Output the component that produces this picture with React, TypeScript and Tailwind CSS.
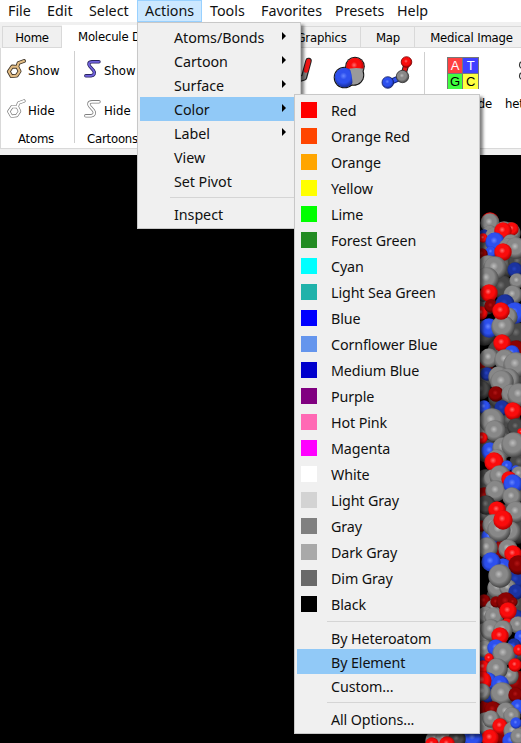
import type { ReactNode } from 'react';

type Kind = 'c' | 'o' | 'n' | 'C' | 'O' | 'N';
type Atom = [number, number, number, Kind];

// Atoms listed back to front: x, y, radius, element (capitals are shaded, deeper atoms)
const atoms: Atom[] = [
  [488, 250, 12, 'C'], [506, 265, 12, 'C'], [486, 272, 12, 'C'], [502, 287, 11, 'C'], [518, 262, 9, 'C'], [487, 305, 9, 'C'], [484, 333, 12, 'C'],
  [517, 334, 11, 'C'], [500, 352, 12, 'C'], [484, 365, 9, 'O'], [516, 350, 9, 'O'], [486, 378, 10, 'C'], [515, 378, 11, 'C'], [500, 398, 11, 'C'],
  [509, 421, 11, 'C'], [486, 414, 10, 'C'], [505, 436, 8, 'C'], [487, 451, 11, 'C'], [520, 463, 10, 'C'], [486, 482, 12, 'C'], [518, 486, 12, 'C'],
  [484, 497, 9, 'O'], [510, 516, 12, 'C'], [484, 517, 11, 'C'], [517, 530, 13, 'C'], [484, 540, 11, 'C'], [501, 548, 11, 'O'], [516, 566, 11, 'C'],
  [516, 580, 9, 'N'], [500, 598, 13, 'C'], [517, 605, 11, 'C'], [485, 622, 12, 'C'], [515, 620, 10, 'N'], [484, 658, 10, 'N'], [518, 650, 11, 'C'],
  [516, 684, 13, 'O'], [487, 690, 13, 'C'], [492, 708, 12, 'O'], [515, 700, 9, 'C'], [504, 733, 13, 'O'], [484, 730, 12, 'C'],
  [510, 233, 10, 'c'], [490, 221, 8, 'o'], [490, 223, 9, 'c'], [490, 233, 7, 'c'], [484, 235, 5, 'N'], [494, 236, 8, 'c'],
  [504, 231, 9, 'c'], [512, 229, 6, 'o'], [503, 231, 8, 'o'], [483, 238, 4, 'o'], [495, 242, 9, 'n'],
  [511, 243, 8, 'c'], [508, 248, 9, 'c'], [516, 248, 10, 'c'], [491, 252, 5, 'n'], [482, 254, 5, 'O'], [503, 252, 8, 'o'],
  [488, 266, 10, 'c'], [495, 268, 11, 'c'], [487, 279, 11, 'c'], [515, 270, 7, 'N'], [517, 281, 7, 'c'], [513, 295, 9, 'c'],
  [483, 296, 5, 'C'], [489, 293, 8, 'o'], [481, 313, 6, 'o'], [491, 306, 6, 'O'], [505, 304, 9, 'N'], [515, 313, 10, 'n'],
  [489, 328, 9, 'n'], [508, 317, 9, 'c'], [503, 327, 11, 'c'], [501, 311, 8, 'o'], [502, 343, 8, 'o'],
  [489, 358, 9, 'c'], [512, 353, 7, 'n'], [505, 360, 10, 'c'], [516, 365, 12, 'c'], [487, 374, 6, 'N'], [499, 377, 10, 'c'],
  [508, 380, 11, 'c'], [502, 382, 11, 'c'], [481, 390, 9, 'C'], [496, 394, 7, 'O'], [511, 394, 9, 'c'], [519, 395, 11, 'c'],
  [484, 407, 6, 'n'], [502, 408, 7, 'N'], [513, 411, 8, 'o'], [486, 427, 10, 'c'], [492, 421, 12, 'c'], [495, 431, 10, 'c'],
  [516, 427, 8, 'C'], [482, 438, 5, 'o'], [521, 432, 3, 'o'], [490, 451, 8, 'n'], [503, 448, 10, 'c'], [514, 445, 12, 'c'],
  [497, 459, 9, 'c'], [494, 462, 9, 'o'], [507, 466, 5, 'n'], [516, 470, 4, 'n'], [519, 474, 7, 'c'], [493, 479, 9, 'c'], [500, 476, 10, 'c'],
  [496, 491, 10, 'c'], [512, 496, 9, 'c'], [509, 479, 7, 'o'], [513, 484, 9, 'n'], [512, 497, 9, 'c'], [486, 505, 9, 'C'], [516, 512, 10, 'c'],
  [497, 510, 8, 'o'], [481, 526, 5, 'O'], [510, 532, 10, 'c'], [490, 537, 8, 'n'], [493, 525, 10, 'c'], [499, 530, 11, 'c'], [503, 520, 9, 'o'],
  [487, 548, 10, 'c'], [508, 549, 9, 'c'], [513, 554, 8, 'o'],
  [503, 567, 8, 'n'], [491, 562, 9, 'n'], [518, 565, 9, 'O'], [498, 588, 10, 'c'], [508, 588, 8, 'c'], [500, 576, 11, 'c'],
  [516, 592, 7, 'N'], [484, 601, 6, 'O'], [494, 608, 8, 'c'], [496, 602, 5, 'O'], [506, 602, 9, 'O'], [513, 602, 4, 'O'],
  [486, 615, 8, 'c'], [494, 617, 9, 'c'], [508, 611, 8, 'o'], [507, 625, 6, 'o'], [518, 625, 8, 'c'], [484, 634, 10, 'c'], [491, 630, 10, 'c'], [503, 630, 9, 'c'],
  [500, 636, 8, 'o'], [521, 637, 6, 'n'], [485, 649, 8, 'c'], [496, 648, 8, 'n'], [514, 645, 6, 'N'], [510, 652, 8, 'n'],
  [504, 654, 11, 'c'], [489, 658, 4, 'o'], [483, 667, 6, 'o'], [510, 676, 8, 'c'], [497, 669, 10, 'c'], [519, 650, 5, 'o'], [515, 665, 6, 'o'],
  [488, 681, 8, 'n'], [482, 681, 9, 'o'], [500, 684, 8, 'n'], [488, 695, 7, 'N'], [482, 692, 8, 'c'], [502, 694, 11, 'c'],
  [516, 695, 7, 'O'], [493, 710, 8, 'O'], [518, 707, 7, 'n'], [506, 712, 9, 'c'], [512, 716, 8, 'c'], [486, 724, 11, 'c'], [491, 719, 8, 'c'],
  [500, 726, 7, 'o'], [513, 731, 9, 'c'], [516, 723, 5, 'n'], [490, 738, 8, 'o'], [511, 741, 8, 'n'], [519, 737, 8, 'c'],
  [473, 738, 9, 'n'], [435, 740, 9, 'c'], [444, 739, 8, 'c'], [457, 739, 8, 'C'], [432, 744, 6, 'o'], [447, 744, 7, 'o'],
];

const palette: { id: Kind; hi: string; mid: string; low: string }[] = [
  { id: 'c', hi: '#bebebe', mid: '#888888', low: '#3c3c3c' },
  { id: 'o', hi: '#ff7070', mid: '#fa0c0c', low: '#a00000' },
  { id: 'n', hi: '#6686ff', mid: '#2d50ee', low: '#162a90' },
  { id: 'C', hi: '#727272', mid: '#484848', low: '#1c1c1c' },
  { id: 'O', hi: '#b51515', mid: '#8b0303', low: '#400000' },
  { id: 'N', hi: '#2744c4', mid: '#1b339f', low: '#0c1850' },
];

function Gradients() {
  return (
    <defs>
      {palette.map((p) => (
        <radialGradient key={p.id} id={'g' + p.id} cx="0.45" cy="0.42" r="0.6">
          <stop offset="0" stopColor={p.hi} />
          <stop offset="0.3" stopColor={p.mid} />
          <stop offset="0.6" stopColor={p.mid} />
          <stop offset="1" stopColor={p.low} />
        </radialGradient>
      ))}
      <clipPath id="redCap">
        <path d="M340 50 H370 V70.5 Q356 66 345 70 Z" />
      </clipPath>
      <clipPath id="blueCap">
        <path d="M330 62 H347.5 Q353 74 352.5 88 H330 Z" />
      </clipPath>
    </defs>
  );
}

function Molecule() {
  return (
    <svg className="block h-[588px] w-[521px] shrink-0" viewBox="0 155 521 588">
      <Gradients />
      {atoms.map(([x, y, r, k], i) => (
        <circle key={i} cx={x} cy={y} r={r + 0.7} fill={`url(#g${k})`} />
      ))}
    </svg>
  );
}

function AtomsIcon({ filled }: { filled?: boolean }) {
  const outer = filled ? '#3f3426' : '#777';
  const inner = filled ? '#e3bd85' : '#fff';
  const d = 'M8.2 7.5 L13.3 7.8 L15.6 12.3 L12.7 16.6 L7.5 17.2 L4.8 12.5 Z M13.3 7.8 L14.5 4 L20 2';
  return (
    <svg className="size-6 shrink-0" viewBox="0 0 24 24" fill="none" strokeLinejoin="round" strokeLinecap="round">
      <path d={d} stroke={outer} strokeWidth={filled ? 3.8 : 3.2} />
      <path d={d} stroke={inner} strokeWidth={filled ? 2.1 : 1.9} />
    </svg>
  );
}

function CartoonIcon({ filled }: { filled?: boolean }) {
  const d = 'M19 2.8 H12 C8.5 2.8 8 5 10 7.5 L13.5 11.5 C15.5 14 14 16.5 11 16.8 H5.8';
  return (
    <svg className="size-6 shrink-0" viewBox="0 0 24 24" fill="none" strokeLinejoin="round" strokeLinecap="round">
      <path d={d} stroke={filled ? '#28235f' : '#808080'} strokeWidth="3.4" />
      <path d={d} stroke={filled ? '#7163de' : '#fff'} strokeWidth="1.8" />
    </svg>
  );
}

function Tool({ icon, label }: { icon: ReactNode; label: string }) {
  return (
    <div className="flex h-10 shrink-0 items-center text-[13px] tracking-normal">
      {icon}
      <span>{label}</span>
    </div>
  );
}

const tab = "flex h-[22px] items-center justify-center border border-[#d9d9d9] bg-[#f0f0f0] pt-[2px] text-[13px] whitespace-nowrap shrink-0";

function Ribbon() {
  return (
    <div className="h-[133px] bg-[#f0f0f0] pt-[3px] font-['DejaVu_Sans_Condensed','Noto_Sans',sans-serif] tracking-[-0.2px] text-black">
      <div className="flex h-[23px] items-end overflow-hidden pl-[2px]">
        <div className={tab + ' w-[60px]'}>Home</div>
        <div className="flex h-[23px] w-[99px] shrink-0 items-center overflow-hidden bg-white pl-4 text-[13px] whitespace-nowrap">Molecule Display</div>
        <div className={tab + ' w-[118px]'} />
        <div className={tab + ' w-[82px] border-l-0 pl-1'}>Graphics</div>
        <div className={tab + ' w-[54px] border-l-0 pl-px'}>Map</div>
        <div className={tab + ' w-[115px] border-l-0 pr-px'}>Medical Image</div>
      </div>
      <div className="relative flex h-[101px] border-b border-l border-[#d9d9d9] bg-white">
        <div className="mt-[3px] flex h-[92px] w-[74px] flex-col border-r border-[#cfcfcf] pl-[3px]">
          <Tool icon={<AtomsIcon filled />} label="Show" />
          <Tool icon={<AtomsIcon />} label="Hide" />
          <span className="-mt-[2px] pl-[14px] text-[13px]">Atoms</span>
        </div>
        <div className="mt-[3px] flex h-[92px] w-[74px] flex-col pl-[5px]">
          <Tool icon={<CartoonIcon filled />} label="Show" />
          <Tool icon={<CartoonIcon />} label="Hide" />
          <span className="-mt-[2px] pl-[7px] text-[13px]">Cartoons</span>
        </div>
        <svg className="absolute top-0 left-[289px] h-[60px] w-[231px]" viewBox="290 48 231 60">
          <path d="M299 79 L304 77.5 L308.5 61" stroke="#222" strokeWidth="6.5" fill="none" strokeLinecap="round" strokeLinejoin="round" />
          <path d="M299 79 L304 77.5 L306 70" stroke="#888" strokeWidth="4" fill="none" strokeLinecap="round" strokeLinejoin="round" />
          <path d="M306 70.5 L308.5 61" stroke="#ee1515" strokeWidth="4.5" fill="none" strokeLinecap="round" />
          <g fill="#111">
            <circle cx="355" cy="66.5" r="9.8" />
            <circle cx="353.5" cy="75" r="10.8" />
            <circle cx="344.5" cy="77.5" r="10.8" />
          </g>
          <circle cx="355" cy="66.5" r="8.8" fill="#8c8c8c" />
          <circle cx="344.5" cy="77.5" r="9.8" fill="#8c8c8c" clipPath="url(#blueCap)" />
          <circle cx="353.5" cy="75" r="9.8" fill="#9a9a9a" />
          <circle cx="355" cy="66.5" r="8.8" fill="url(#go)" clipPath="url(#redCap)" />
          <circle cx="344.5" cy="77.5" r="9.8" fill="url(#gn)" clipPath="url(#blueCap)" />
          <path d="M403 76 L406.5 64" stroke="#222" strokeWidth="6" />
          <path d="M403 76 L406.5 64" stroke="#e51818" strokeWidth="4" />
          <path d="M388 83 L402 77" stroke="#152780" strokeWidth="6" />
          <path d="M388 83 L402 77" stroke="#3152ee" strokeWidth="4" />
          <circle cx="406.5" cy="62" r="5.3" fill="url(#go)" stroke="#7d0000" strokeWidth="0.8" />
          <circle cx="402.5" cy="76.5" r="6.2" fill="url(#gc)" stroke="#333" strokeWidth="0.8" />
          <circle cx="387.8" cy="82.5" r="5.8" fill="url(#gn)" stroke="#111d60" strokeWidth="0.8" />
          <path d="M424.5 52 V143" stroke="#cfcfcf" />
        </svg>
        <div className="absolute top-[9px] left-[446px] grid size-8 grid-cols-2 border border-[#777] text-center font-['Liberation_Sans',sans-serif] text-[13px] leading-[15px]">
          <span className="border-r border-b border-[#777] bg-[#ff4040] text-white">A</span>
          <span className="border-b border-[#777] bg-[#4040ff] text-white">T</span>
          <span className="border-r border-[#777] bg-[#40ff40]">G</span>
          <span className="bg-[#ffff40]">C</span>
        </div>
        <span className="absolute top-[46px] right-[29px] text-[13px]">nucleotide</span>
        <span className="absolute top-[46px] left-[504px] text-[13px]">hetero</span>
        <svg className="absolute top-[12px] left-[517px] h-6 w-1" viewBox="0 0 4 24" fill="none" stroke="#333" strokeWidth="1.2">
          <circle cx="5" cy="5" r="3.5" />
          <circle cx="5" cy="16" r="3.5" />
        </svg>
      </div>
    </div>
  );
}

const actions = ['Atoms/Bonds', 'Cartoon', 'Surface', 'Color', 'Label', 'View', 'Set Pivot'];

const colors: [string, string][] = [
  ['Red', '#ff0000'], ['Orange Red', '#ff4500'], ['Orange', '#ffa500'], ['Yellow', '#ffff00'], ['Lime', '#00ff00'],
  ['Forest Green', '#228b22'], ['Cyan', '#00ffff'], ['Light Sea Green', '#20b2aa'], ['Blue', '#0000ff'],
  ['Cornflower Blue', '#6495ed'], ['Medium Blue', '#0000cd'], ['Purple', '#800080'], ['Hot Pink', '#ff69b4'],
  ['Magenta', '#ff00ff'], ['White', '#ffffff'], ['Light Gray', '#d3d3d3'], ['Gray', '#808080'],
  ['Dark Gray', '#a9a9a9'], ['Dim Gray', '#696969'], ['Black', '#000000'],
];

function ActionsMenu() {
  return (
    <div className="absolute top-[22px] left-[137px] h-[207px] w-[164px] border border-[#c8c8c8] bg-[#f0f0f0] px-[2px] pt-[2px] tracking-[-0.05px] shadow-[3px_3px_3px_rgba(0,0,0,0.5)]">
      {actions.map((name, i) => (
        <div key={name} className={'flex h-6 items-center pl-[34px] ' + (name === 'Color' ? 'bg-[#91c9f7]' : '')}>
          <span className="pt-[2px]">{name}</span>
          {i < 5 && <span className="mr-3 mb-[2px] ml-auto h-0 w-0 border-y-4 border-l-4 border-y-transparent border-l-black" />}
        </div>
      ))}
      <div className="mt-1 mb-1 ml-[30px] h-px bg-[#d5d5d5]" />
      <div className="flex h-6 items-center pt-[2px] pl-[34px]">Inspect</div>
    </div>
  );
}

function ColorMenu() {
  return (
    <div className="absolute top-[94px] left-[294px] h-[640px] w-[186px] border border-[#c8c8c8] bg-[#f0f0f0] pt-[3px] pr-[3px] pl-[2px] tracking-[-0.11px] shadow-[3px_3px_3px_rgba(0,0,0,0.5)]">
      {colors.map(([name, hex]) => (
        <div key={name} className="flex h-[26px] items-center pb-[2px]">
          <span className="mr-[14px] mb-px ml-1 size-4" style={{ backgroundColor: hex }} />
          <span className="pt-[2px]">{name}</span>
        </div>
      ))}
      <div className="mt-[3px] mb-1 ml-[30px] h-px bg-[#d5d5d5]" />
      <div className="flex h-6 items-center pt-[2px] pl-[34px]">By Heteroatom</div>
      <div className="-mt-px flex h-[25px] items-center bg-[#91c9f7] pt-[2px] pl-[34px]">By Element</div>
      <div className="flex h-6 items-center pt-px pl-[34px]">Custom...</div>
      <div className="mt-1 mb-1 ml-[30px] h-px bg-[#d5d5d5]" />
      <div className="flex h-6 items-center pt-[2px] pl-[34px]">All Options...</div>
    </div>
  );
}

const menus = [
  ['File', 'w-[39px] pl-2'], ['Edit', 'w-[42px] pl-2'], ['Select', 'w-[56px] pl-2'],
  ['Actions', 'w-[65px] border border-[#99d1ff] bg-[#cce8ff] pl-[7px]'],
  ['Tools', 'w-[51px] pl-2'], ['Favorites', 'w-[74px] pl-2'], ['Presets', 'w-[62px] pl-2'], ['Help', 'w-[50px] pl-2'],
];

export default function App() {
  return (
    <div className="relative h-[743px] w-[521px] overflow-hidden bg-black font-['Noto_Sans',sans-serif] text-[14.3px] leading-5 whitespace-nowrap text-[#111]">
      <div className="flex h-[22px] bg-white">
        {menus.map(([name, cls]) => (
          <div key={name} className={'flex h-[22px] shrink-0 items-center ' + cls}>{name}</div>
        ))}
      </div>
      <Ribbon />
      <Molecule />
      <ActionsMenu />
      <ColorMenu />
    </div>
  );
}
